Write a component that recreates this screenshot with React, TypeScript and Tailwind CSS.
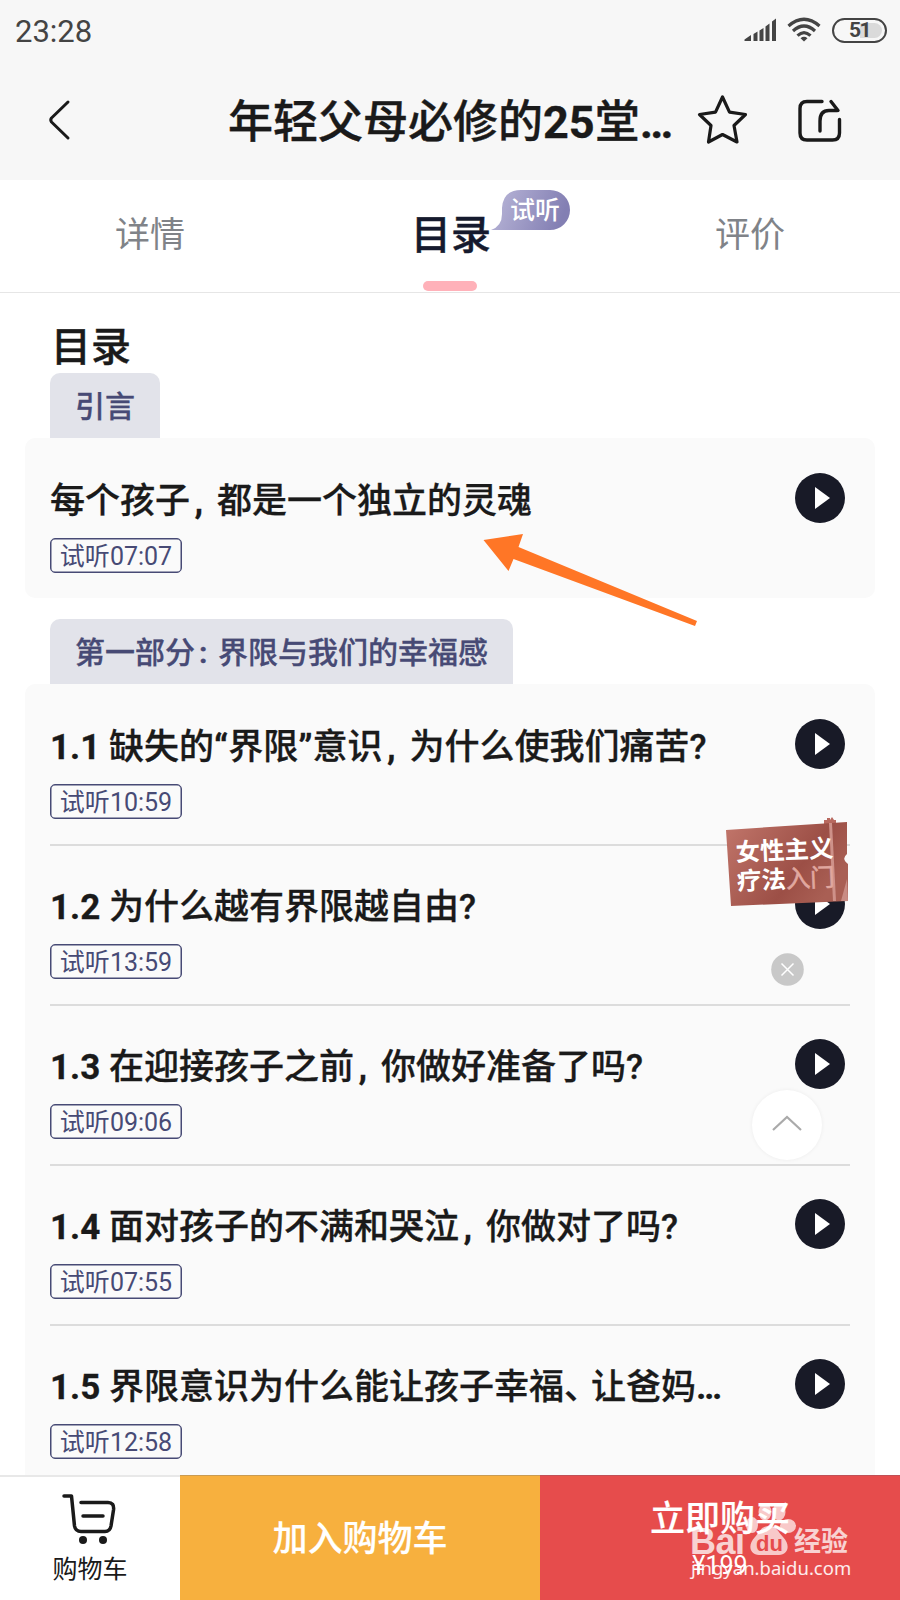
import React from 'react';

interface Lesson {
  title: string;
  duration: string;
}

interface Section {
  name: string;
  lessons: Lesson[];
}

const SECTIONS: Section[] = [
  {
    name: '引言',
    lessons: [{ title: '每个孩子,都是一个独立的灵魂', duration: '07:07' }],
  },
  {
    name: '第一部分:界限与我们的幸福感',
    lessons: [
      { title: '1.1 缺失的“界限”意识,为什么使我们痛苦?', duration: '10:59' },
      { title: '1.2 为什么越有界限越自由?', duration: '13:59' },
      { title: '1.3 在迎接孩子之前,你做好准备了吗?', duration: '09:06' },
      { title: '1.4 面对孩子的不满和哭泣,你做对了吗?', duration: '07:55' },
      { title: '1.5 界限意识为什么能让孩子幸福、让爸妈…', duration: '12:58' },
    ],
  },
];

// Sets full-width punctuation tighter than the surrounding characters and
// gives digits, quotes and the ellipsis a bolder weight than the Chinese text
const Heading = ({ text }: { text: string }) => (
  <>
    {text.split(/([,:、]|[\d.“”…]+ ?)/).map((part, i) => {
      if (part === '、') return <span key={i} className="inline-block w-[0.77em]">{part}</span>;
      if (part === ',' || part === ':') return <span key={i} className="inline-block w-[0.77em] pl-[0.13em] font-bold">{part}</span>;
      if (/^[\d.“”…]/.test(part)) return <span key={i} className="font-bold">{part}</span>;
      return <React.Fragment key={i}>{part}</React.Fragment>;
    })}
  </>
);

const StatusBar = () => (
  <div className="flex h-[60px] items-center justify-between pl-[15px] pr-[13px] text-[#444]">
    <span className="pt-1 text-[31px] leading-[62px]">23:28</span>
    <div className="flex items-center">
      <svg width="34" height="26" viewBox="0 0 34 26" fill="#444">
        <path d="M0.500 24 V22.500 L7 18 V24 Z M9.5 17 L13.500 14.500 V24 H9.5 Z M15.5 13.500 L19.500 11 V24 H15.5 Z M21.5 9.5 L25.500 6.500 V24 H21.5 Z M28 4.500 L32 1.5 V24 H28 Z" />
      </svg>
      <svg className="ml-[9px]" width="34" height="26" viewBox="0 0 34 26" fill="none" stroke="#444" strokeWidth="3.2">
        <path d="M1.5 9 Q17 -4.5 32.5 9" />
        <path d="M6 14 Q17 4 28 14" />
        <path d="M10.5 18.6 Q17 12.6 23.5 18.6" />
        <path d="M13.5 21.2 Q17 18.4 20.5 21.2 L17 24.6 Z" fill="#444" stroke="none" />
      </svg>
      <div className="ml-[11px] flex h-[25px] w-[55px] items-center justify-center rounded-full border-2 border-[#444] p-[3px]">
        <div className="flex h-[15px] w-full items-center justify-center rounded-r-full bg-linear-to-r from-transparent from-50% to-[#dadada] to-50% text-[21px] font-bold leading-none tracking-[-1.5px]">
          51
        </div>
      </div>
    </div>
  </div>
);

const NavBar = () => (
  <div className="flex h-[120px] items-center text-[#1a1a1a]">
    <svg className="ml-[45px]" width="30" height="44" viewBox="0 0 30 44" fill="none" stroke="currentColor" strokeWidth="3" strokeLinecap="round" strokeLinejoin="round">
      <path d="M23 4 L6.5 20 Q5 22 6.5 24 L23 40" />
    </svg>
    <h1 className="ml-[153px] w-[444px] whitespace-nowrap pt-1.5 text-[45px] font-medium leading-[60px] [-webkit-text-stroke:0.4px]">
      <Heading text="年轻父母必修的25堂…" />
    </h1>
    <svg className="ml-[25px]" width="52" height="52" viewBox="0 0 52 52" fill="none" stroke="currentColor" strokeWidth="3.2" strokeLinejoin="round">
      <path d="M25.5 3 L32.5 18.2 L48.5 20.5 L37 31.5 L40 48 L25.5 40.5 L11.5 48 L14 31.5 L2.5 20.5 L18.5 18.2 Z" />
    </svg>
    <svg className="ml-[47px]" width="46" height="46" viewBox="0 0 46 46" fill="none" stroke="currentColor" strokeWidth="3.4" strokeLinecap="round">
      <path d="M26 4.5 H11 Q4 4.5 4 11.5 V36 Q4 43 11 43 H36.500 Q43.500 43 43.500 36 V22.500" />
      <path d="M24 34 V24 Q24 13.500 33 13.500 H41" />
      <path d="M35 4.500 L42 13.500" />
    </svg>
  </div>
);

const Tabs = () => (
  <nav className="grid h-[113px] grid-cols-3 border-b border-[#e6e6e6] bg-white text-center text-[35px] leading-[112px] text-[#808388]">
    <span>详情</span>
    <div className="relative h-28">
      <span className="pl-0.5 text-[40px] font-medium text-[#151a2e] [-webkit-text-stroke:0.4px]">目录</span>
      <div className="absolute bottom-px left-1/2 h-2.5 w-[54px] -translate-x-1/2 rounded-full bg-[#ffb1b9]" />
      <div className="absolute left-[191px] top-2.5 h-10 w-[79px]">
        <svg className="absolute inset-0" width="79" height="40" viewBox="0 0 79 40">
          <defs>
            <linearGradient id="trial" x1="0" x2="1" y1="0" y2="0.2">
              <stop offset="0" stopColor="#bbb8d9" />
              <stop offset="1" stopColor="#837fb3" />
            </linearGradient>
          </defs>
          <path fill="url(#trial)" d="M0 40 Q11 36 11 24 V18 Q12 0 30 0 H59 A20 20 0 0 1 59 40 Z" />
        </svg>
        <span className="absolute left-[19px] top-px whitespace-nowrap text-[25px] font-medium leading-10 text-white">试听</span>
      </div>
    </div>
    <span>评价</span>
  </nav>
);

const LessonRow = ({ lesson }: { lesson: Lesson }) => (
  <li className="flex h-40 justify-between pr-[5px] not-first:shadow-[inset_0_2px_0_#dcdcdc]">
    <div>
      <h3 className="mt-[39px] h-[51px] whitespace-nowrap text-[35px] font-medium leading-[50px] text-[#1a1a1a] [-webkit-text-stroke:0.3px]">
        <Heading text={lesson.title} />
      </h3>
      <span className="mt-2.5 flex h-[35px] w-[132px] items-center justify-center whitespace-nowrap rounded-[5px] border border-[#474a75] pt-0.5 text-[25px] leading-[33px] text-[#474a75] shadow-[inset_0_0_0_0.5px_#474a75]">
        试听{lesson.duration}
      </span>
    </div>
    <svg className="mt-[35px] shrink-0" width="50" height="50" viewBox="0 0 50 50">
      <circle cx="25" cy="25" r="25" fill="#181a27" />
      <path d="M20 14 L35 25 L20 36 Z" fill="#fff" />
    </svg>
  </li>
);

const SectionBlock = ({ section }: { section: Section }) => (
  <section className="mb-[21px]">
    <div className="ml-[50px] inline-flex h-[65px] items-center rounded-t-[10px] bg-[#e2e3ea] px-[25px] align-top text-[30px] font-medium text-[#474a75] [-webkit-text-stroke:0.3px]">
      <h2 className="whitespace-nowrap pt-[3px] leading-[62px]">
        <Heading text={section.name} />
      </h2>
    </div>
    <ul className="mx-[25px] rounded-[10px] bg-[#fafafa] px-[25px]">
      {section.lessons.map((lesson) => (
        <LessonRow key={lesson.title} lesson={lesson} />
      ))}
    </ul>
  </section>
);

const BuyBar = () => (
  <footer className="flex h-[125px] shrink-0 text-white">
    <button className="flex w-[180px] flex-col items-center border-t-2 border-[#e8e8e8] bg-white text-[#1a1a1a]">
      <svg className="mr-[3px] mt-[15px]" width="56" height="54" viewBox="0 0 56 54" fill="none" stroke="currentColor" strokeWidth="3.5" strokeLinecap="round" strokeLinejoin="round">
        <path d="M3 4 H10.500 L13.500 34 Q14.500 39.500 20 39.500 H44 Q49 39.500 50 34 L52.500 18 Q53.500 10.500 47 10.500 H20" />
        <path d="M22 24 H42" />
        <circle cx="22" cy="48" r="4" fill="currentColor" stroke="none" />
        <circle cx="42" cy="48" r="4" fill="currentColor" stroke="none" />
      </svg>
      <span className="mt-2 text-[25px] leading-[32px]">购物车</span>
    </button>
    <button className="w-[360px] border-t border-[#c99b52] bg-[#f7b03e] pt-[5px] text-[35px] font-medium [-webkit-text-stroke:0.2px]">加入购物车</button>
    <button className="flex w-[360px] flex-col items-center border-t border-[#c05056] bg-[#e64c4c]">
      <span className="mt-[19px] text-[35px] font-medium leading-[50px] [-webkit-text-stroke:0.2px]">立即购买</span>
      <span className="mt-[5px] text-[25px] leading-[32px]">¥199</span>
    </button>
  </footer>
);

const Watermark = () => (
  <div className="absolute bottom-0 left-[688px] h-[112px] w-[180px] text-white/75">
    <span className="absolute left-0.5 top-[34px] font-['Liberation_Sans'] text-[36px] font-bold leading-[40px] tracking-[-0.5px]">Bai</span>
    <svg className="absolute left-[57px] top-[10px]" width="60" height="60" viewBox="0 0 60 60" fill="#fff" fillOpacity="0.7">
      <ellipse cx="7" cy="27" rx="6" ry="8" />
      <ellipse cx="20" cy="14" rx="6.500" ry="8.500" />
      <ellipse cx="34" cy="14" rx="6.500" ry="8.500" />
      <ellipse cx="43" cy="28" rx="8" ry="7" />
      <path d="M24 28 C32 28 33 34 38 39 C46 47 43 57 34 57 H14 C5 57 2 47 10 39 C15 34 16 28 24 28 Z" />
    </svg>
    <span className="absolute left-[68px] top-[43px] font-['Liberation_Sans'] text-[22px] font-bold leading-[26px] text-[#e64c4c]">du</span>
    <span className="absolute left-[106px] top-[35px] whitespace-nowrap text-[27px] font-bold leading-[38px]">经验</span>
    <span className="absolute left-[3px] top-[67px] font-['Noto_Sans'] text-[18.5px] leading-[26px] text-white/90">jingyan.baidu.com</span>
  </div>
);

const FloatingTools = () => (
  <>
    <svg className="absolute left-[722px] top-[812px] font-['Noto_Sans_CJK_SC',sans-serif]" width="132" height="98" viewBox="0 0 132 98">
      <defs>
        <linearGradient id="book" x1="0" x2="1" y1="0" y2="0.5">
          <stop offset="0" stopColor="#c2766b" />
          <stop offset="0.7" stopColor="#9c4f46" />
          <stop offset="1" stopColor="#a95f54" />
        </linearGradient>
      </defs>
      <path d="M102 12 V8 H105 V6 H108 V8 L110 5 L112 8 H114 V13 Z" fill="#b8695f" />
      <path d="M4 18 L125 10 V42 Q119 47 126 52 V89 L9 94 Z" fill="url(#book)" />
      <path d="M107 11 H110 L114 89 H111 Z" fill="#ce9189" />
      <path d="M125 67 L119 89 H126 Z" fill="#c98c84" />
      <g transform="rotate(-2.500 60 50)" fontSize="24.5" fontWeight="700">
        <text x="14" y="47" fill="#fff">女性主义</text>
        <text x="14" y="76" fill="#fff">疗法<tspan fill="#e0a79f" stroke="#e0a79f" strokeWidth="0.6" fontWeight="400">入门</tspan></text>
      </g>
    </svg>
    <svg className="absolute left-[771px] top-[953px]" width="33" height="33" viewBox="0 0 33 33">
      <circle cx="16.500" cy="16.500" r="16.300" fill="#c8c8c8" />
      <path d="M10.500 10.500 L22.500 22.500 M22.500 10.500 L10.500 22.500" stroke="#fff" strokeWidth="1.500" />
    </svg>
    <button className="absolute left-[752px] top-[1090px] flex size-[70px] items-center justify-center rounded-full bg-white shadow-[0_0_4px_rgba(0,0,0,0.06)]">
      <svg className="-mt-1" width="30" height="16" viewBox="0 0 30 16" fill="none" stroke="#aaa" strokeWidth="2.2">
        <path d="M1 15 L15 2 L29 15" />
      </svg>
    </button>
  </>
);

const App: React.FC = () => {
  return (
    <div className="relative flex h-[1600px] w-[900px] flex-col overflow-hidden bg-white font-[Roboto,'Noto_Sans_CJK_SC',sans-serif]">
      <header className="h-[180px] shrink-0 bg-[#f7f7f7]">
        <StatusBar />
        <NavBar />
      </header>
      <Tabs />
      <main className="min-h-0 flex-1 overflow-hidden">
        <h2 className="ml-[51px] mt-[28px] h-[52px] text-[40px] font-medium leading-[53px] text-[#1a1a1a] [-webkit-text-stroke:0.4px]">目录</h2>
        {SECTIONS.map((section) => (
          <SectionBlock key={section.name} section={section} />
        ))}
      </main>
      <BuyBar />

      <FloatingTools />
      <svg className="absolute left-[480px] top-[530px]" width="220" height="100" viewBox="0 0 220 100">
        <path d="M3.500 10 L43 4 L38.500 17 L217 91 L215 96 L33.500 29 L28.500 41 Z" fill="#ff7626" />
      </svg>
      <Watermark />
    </div>
  );
};

export default App;
